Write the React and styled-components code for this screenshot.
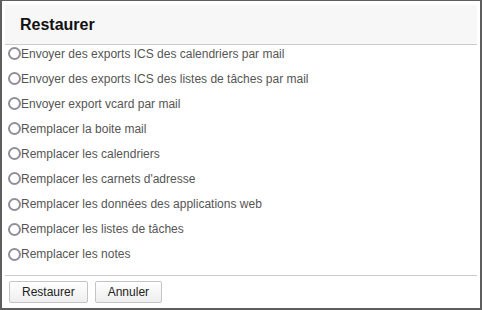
import React from "react";
import styled, { createGlobalStyle } from "styled-components";

const Global = createGlobalStyle`
  html, body { margin: 0; padding: 0; background: #fff; }
  body { font-family: "Liberation Sans", Arial, sans-serif; }
`;

const Dialog = styled.div`
  box-sizing: border-box;
  width: 482px;
  height: 310px;
  border: 2px solid #5e5e5e;
  border-top-width: 1px;
  padding: 4px 3px 0;
  display: flex;
  flex-direction: column;
  background: #fff;
`;

const Header = styled.div`
  height: 39px;
  background: #f7f7f7;
  border-bottom: 1px solid #cccccc;
  display: flex;
  align-items: center;
  padding-left: 15px;
  font-size: 16px;
  font-weight: bold;
  color: #111;
`;

const List = styled.div`
  display: flex;
  flex-direction: column;
  gap: 10.1px;
  padding-top: 1px;
  flex: 1;
`;

const Row = styled.label`
  display: flex;
  align-items: center;
  height: 15px;
  font-size: 12px;
  color: #555;
  cursor: pointer;
`;

const Radio = styled.input.attrs({ type: "radio" })`
  appearance: none;
  -webkit-appearance: none;
  box-sizing: border-box;
  width: 13px;
  height: 13px;
  margin: 0 0 0 3px;
  border: 2px solid #918f9b;
  border-radius: 50%;
  background: #fff;
`;

const Footer = styled.div`
  border-top: 1px solid #cccccc;
  padding: 5px 4px 5px;
  display: flex;
  gap: 7px;
`;

const Button = styled.button`
  box-sizing: border-box;
  height: 22px;
  padding: 0 12px;
  font-family: "Liberation Sans", Arial, sans-serif;
  font-size: 12px;
  color: #222;
  background: linear-gradient(#ffffff, #eeeeee);
  border: 1px solid #c4c4c4;
  border-radius: 2px;
`;

const items = [
  "Envoyer des exports ICS des calendriers par mail",
  "Envoyer des exports ICS des listes de tâches par mail",
  "Envoyer export vcard par mail",
  "Remplacer la boite mail",
  "Remplacer les calendriers",
  "Remplacer les carnets d'adresse",
  "Remplacer les données des applications web",
  "Remplacer les listes de tâches",
  "Remplacer les notes",
];

export default function App() {
  return (
    <>
      <Global />
      <Dialog>
        <Header>Restaurer</Header>
        <List>
          {items.map((t) => (
            <Row key={t}>
              <Radio name="restore" />
              {t}
            </Row>
          ))}
        </List>
        <Footer>
          <Button>Restaurer</Button>
          <Button>Annuler</Button>
        </Footer>
      </Dialog>
    </>
  );
}
